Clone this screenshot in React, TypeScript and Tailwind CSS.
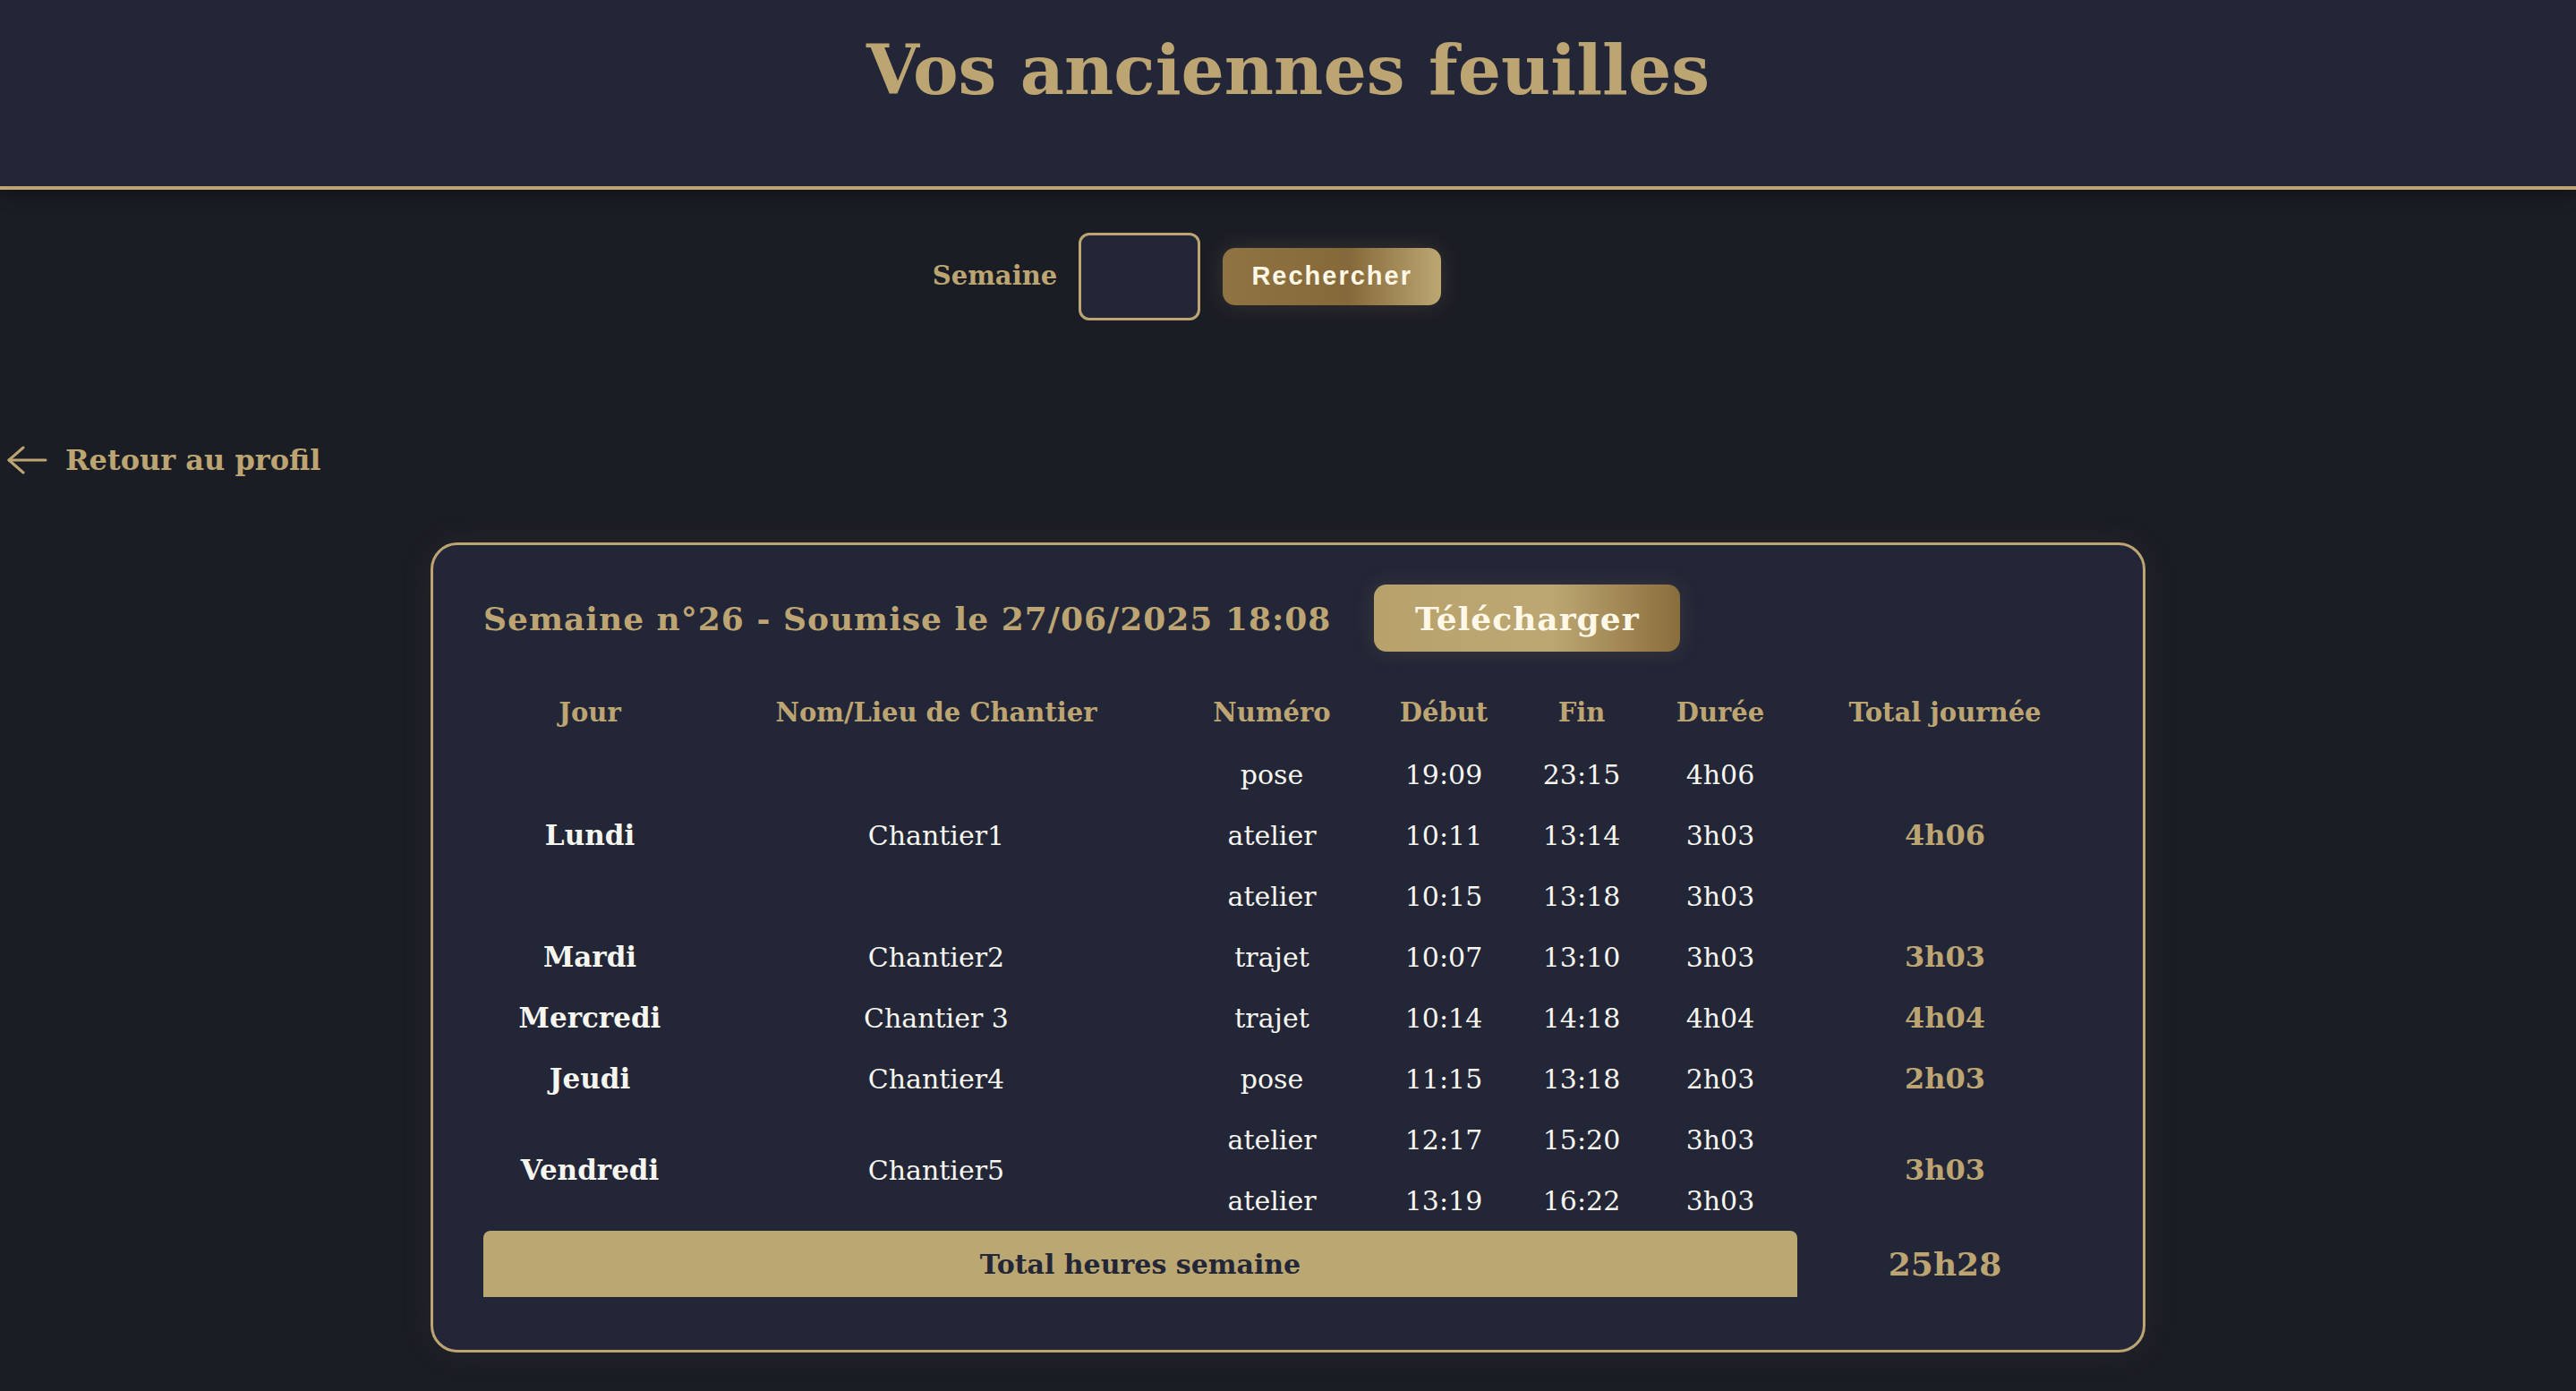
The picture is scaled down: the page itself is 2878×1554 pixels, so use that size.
import React from 'react';

// Données de la semaine soumise
interface Entry {
    numero: string;
    debut: string;
    fin: string;
    duree: string;
}

interface Day {
    jour: string;
    chantier: string;
    total: string;
    entries: Entry[];
}

const days: Day[] = [
    {
        jour: 'Lundi',
        chantier: 'Chantier1',
        total: '4h06',
        entries: [
            { numero: 'pose', debut: '19:09', fin: '23:15', duree: '4h06' },
            { numero: 'atelier', debut: '10:11', fin: '13:14', duree: '3h03' },
            { numero: 'atelier', debut: '10:15', fin: '13:18', duree: '3h03' },
        ],
    },
    {
        jour: 'Mardi',
        chantier: 'Chantier2',
        total: '3h03',
        entries: [{ numero: 'trajet', debut: '10:07', fin: '13:10', duree: '3h03' }],
    },
    {
        jour: 'Mercredi',
        chantier: 'Chantier 3',
        total: '4h04',
        entries: [{ numero: 'trajet', debut: '10:14', fin: '14:18', duree: '4h04' }],
    },
    {
        jour: 'Jeudi',
        chantier: 'Chantier4',
        total: '2h03',
        entries: [{ numero: 'pose', debut: '11:15', fin: '13:18', duree: '2h03' }],
    },
    {
        jour: 'Vendredi',
        chantier: 'Chantier5',
        total: '3h03',
        entries: [
            { numero: 'atelier', debut: '12:17', fin: '15:20', duree: '3h03' },
            { numero: 'atelier', debut: '13:19', fin: '16:22', duree: '3h03' },
        ],
    },
];

const headers = ['Jour', 'Nom/Lieu de Chantier', 'Numéro', 'Début', 'Fin', 'Durée', 'Total journée'];

const ArrowLeft = () => (
    <svg width="46" height="32" viewBox="0 0 46 32" fill="none" stroke="#bca572" strokeWidth="3" strokeLinecap="round" strokeLinejoin="round">
        <path d="M19 2 L3 16 L19 30" />
        <path d="M3 16 H44" />
    </svg>
);

export default function App() {
    return (
        <div className="min-h-screen bg-[#1b1d25] font-['DejaVu_Serif','Liberation_Serif',serif] pb-10">
            {/* En-tête */}
            <header className="h-[212px] bg-[#232636] border-b-4 border-[#bca572] flex justify-center pt-[39px] shadow-[0_6px_16px_rgba(0,0,0,0.35)]">
                <h1 className="text-[76px] leading-[80px] font-bold text-[#bca572]">Vos anciennes feuilles</h1>
            </header>

            {/* Recherche par semaine */}
            <form className="mt-[48px] flex items-center justify-center pr-[226px]">
                <label className="text-[29px] font-bold text-[#bca572] mr-[24px]">Semaine</label>
                <input
                    type="text"
                    className="w-[136px] h-[98px] rounded-[12px] border-[3px] border-[#bca572] bg-[#232636] outline-none"
                />
                <button
                    type="button"
                    className="ml-[25px] w-[244px] h-[64px] rounded-[14px] bg-[linear-gradient(90deg,#8f7342_0%,#86693a_58%,#bca773_100%)] text-[#fff8e7] font-['Liberation_Sans',Arial,sans-serif] font-bold text-[29px] tracking-[2px] shadow-[0_0_24px_rgba(187,164,111,0.18)]"
                >
                    Rechercher
                </button>
            </form>

            {/* Retour */}
            <a className="mt-[136px] h-[40px] flex items-center gap-[20px] pl-[7px] text-[#bca572] font-bold text-[32px] cursor-pointer">
                <ArrowLeft />
                <span>Retour au profil</span>
            </a>

            {/* Feuille de la semaine */}
            <section className="mt-[72px] mx-auto w-[1916px] rounded-[30px] border-[3px] border-[#bca572] bg-[#232636] pl-[56px] pr-[56px] pt-[44px] pb-[59px] shadow-[0_0_40px_rgba(187,164,111,0.07)]">
                <div className="flex items-center gap-[48px]">
                    <h2 className="text-[36px] font-bold text-[#bca572] tracking-[1px]">
                        Semaine n°26 - Soumise le 27/06/2025 18:08
                    </h2>
                    <button className="h-[75px] w-[342px] rounded-[14px] bg-[linear-gradient(90deg,#b8a16b_0%,#bca773_58%,#8a6d3c_100%)] text-[#fff8e7] font-bold text-[36px] tracking-[1px] shadow-[0_0_24px_rgba(187,164,111,0.15)]">
                        Télécharger
                    </button>
                </div>

                <table className="mt-[35px] w-[1798px] table-fixed border-collapse text-center">
                    <colgroup>
                        <col className="w-[238px]" />
                        <col className="w-[536px]" />
                        <col className="w-[214px]" />
                        <col className="w-[170px]" />
                        <col className="w-[138px]" />
                        <col className="w-[172px]" />
                        <col className="w-[330px]" />
                    </colgroup>
                    <thead>
                        <tr className="h-[68px]">
                            {headers.map((h) => (
                                <th key={h} className="text-[29px] font-bold text-[#bca572]">
                                    {h}
                                </th>
                            ))}
                        </tr>
                    </thead>
                    <tbody className="text-[#f7f5ef] text-[30px]">
                        {days.map((day) =>
                            day.entries.map((e, i) => (
                                <tr key={day.jour + i} className="h-[68px]">
                                    {i === 0 && (
                                        <>
                                            <td rowSpan={day.entries.length} className="font-bold text-[31px]">
                                                {day.jour}
                                            </td>
                                            <td rowSpan={day.entries.length}>{day.chantier}</td>
                                        </>
                                    )}
                                    <td>{e.numero}</td>
                                    <td>{e.debut}</td>
                                    <td>{e.fin}</td>
                                    <td>{e.duree}</td>
                                    {i === 0 && (
                                        <td rowSpan={day.entries.length} className="font-bold text-[32px] text-[#bca572]">
                                            {day.total}
                                        </td>
                                    )}
                                </tr>
                            ))
                        )}
                        <tr>
                            <td colSpan={6} className="p-0">
                                <div className="h-[74px] rounded-t-[8px] bg-[#bba772] flex items-center justify-center text-[30px] font-bold text-[#232636]">
                                    Total heures semaine
                                </div>
                            </td>
                            <td className="font-bold text-[36px] text-[#bca572]">25h28</td>
                        </tr>
                    </tbody>
                </table>
            </section>
        </div>
    );
}
